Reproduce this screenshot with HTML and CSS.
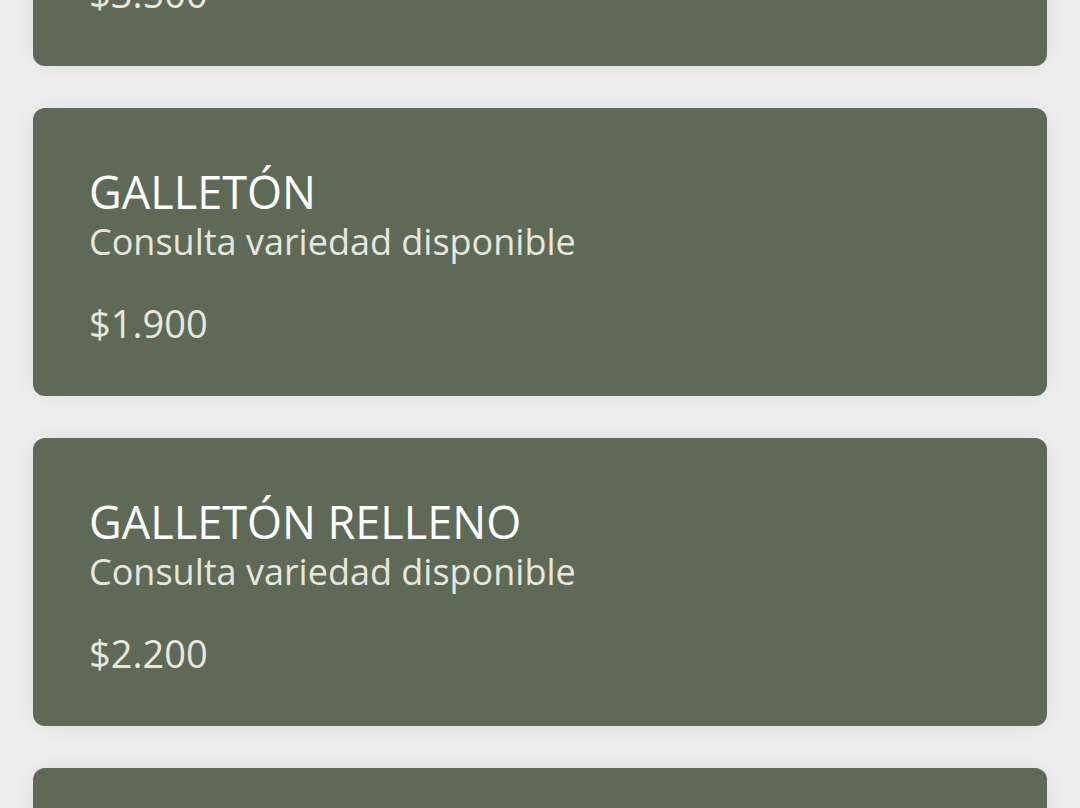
FILE: index.html
```html
<!DOCTYPE html>
<html lang="es">
<head>
  <meta charset="UTF-8" />
  <meta name="viewport" content="width=device-width, initial-scale=1.0"/>
  <title>Menú</title>
  <link rel="stylesheet" href="styles.css">
</head>
<body>

  <div class="menu">
    <div class="item">
      <h3>ALFAJOR</h3>
      <p class="desc">Consulta variedad disponible</p>
      <p class="price">$3.500</p>
    </div>

    <div class="item">
      <h3>GALLETÓN</h3>
      <p class="desc">Consulta variedad disponible</p>
      <p class="price">$1.900</p>
    </div>

    <div class="item">
      <h3>GALLETÓN RELLENO</h3>
      <p class="desc">Consulta variedad disponible</p>
      <p class="price">$2.200</p>
    </div>

    <div class="item">
      <h3>BROWNIE</h3>
      <p class="desc">Consulta variedad disponible</p>
      <p class="price">$2.500</p>
    </div>
  </div>

</body>
</html>
```

FILE: styles.css
```css
body {
  font-family: "Open Sans", "Noto Sans", sans-serif;
  background: #efefef;
  margin: 0;
  overflow: hidden;
}
.menu {
  display: flex;
  flex-direction: column;
  gap: 42px;
  padding: 0 33px;
  margin-top: -222px;
}
.item {
  background: #5f6957;
  border-radius: 12px;
  padding: 60px 56px 0;
  box-shadow: 0 0 30px rgba(0, 0, 0, 0.08);
  height: 288px;
  box-sizing: border-box;
}
.item h3 {
  margin: 0;
  font-size: 45px;
  line-height: 48px;
  font-weight: 400;
  color: #ffffff;
}
.item .desc {
  margin: 0;
  font-size: 36px;
  line-height: 52px;
  color: #e6e8df;
}
.item .price {
  margin: 33px 0 0;
  font-size: 38px;
  line-height: 44px;
  color: #e6e8df;
}
```
